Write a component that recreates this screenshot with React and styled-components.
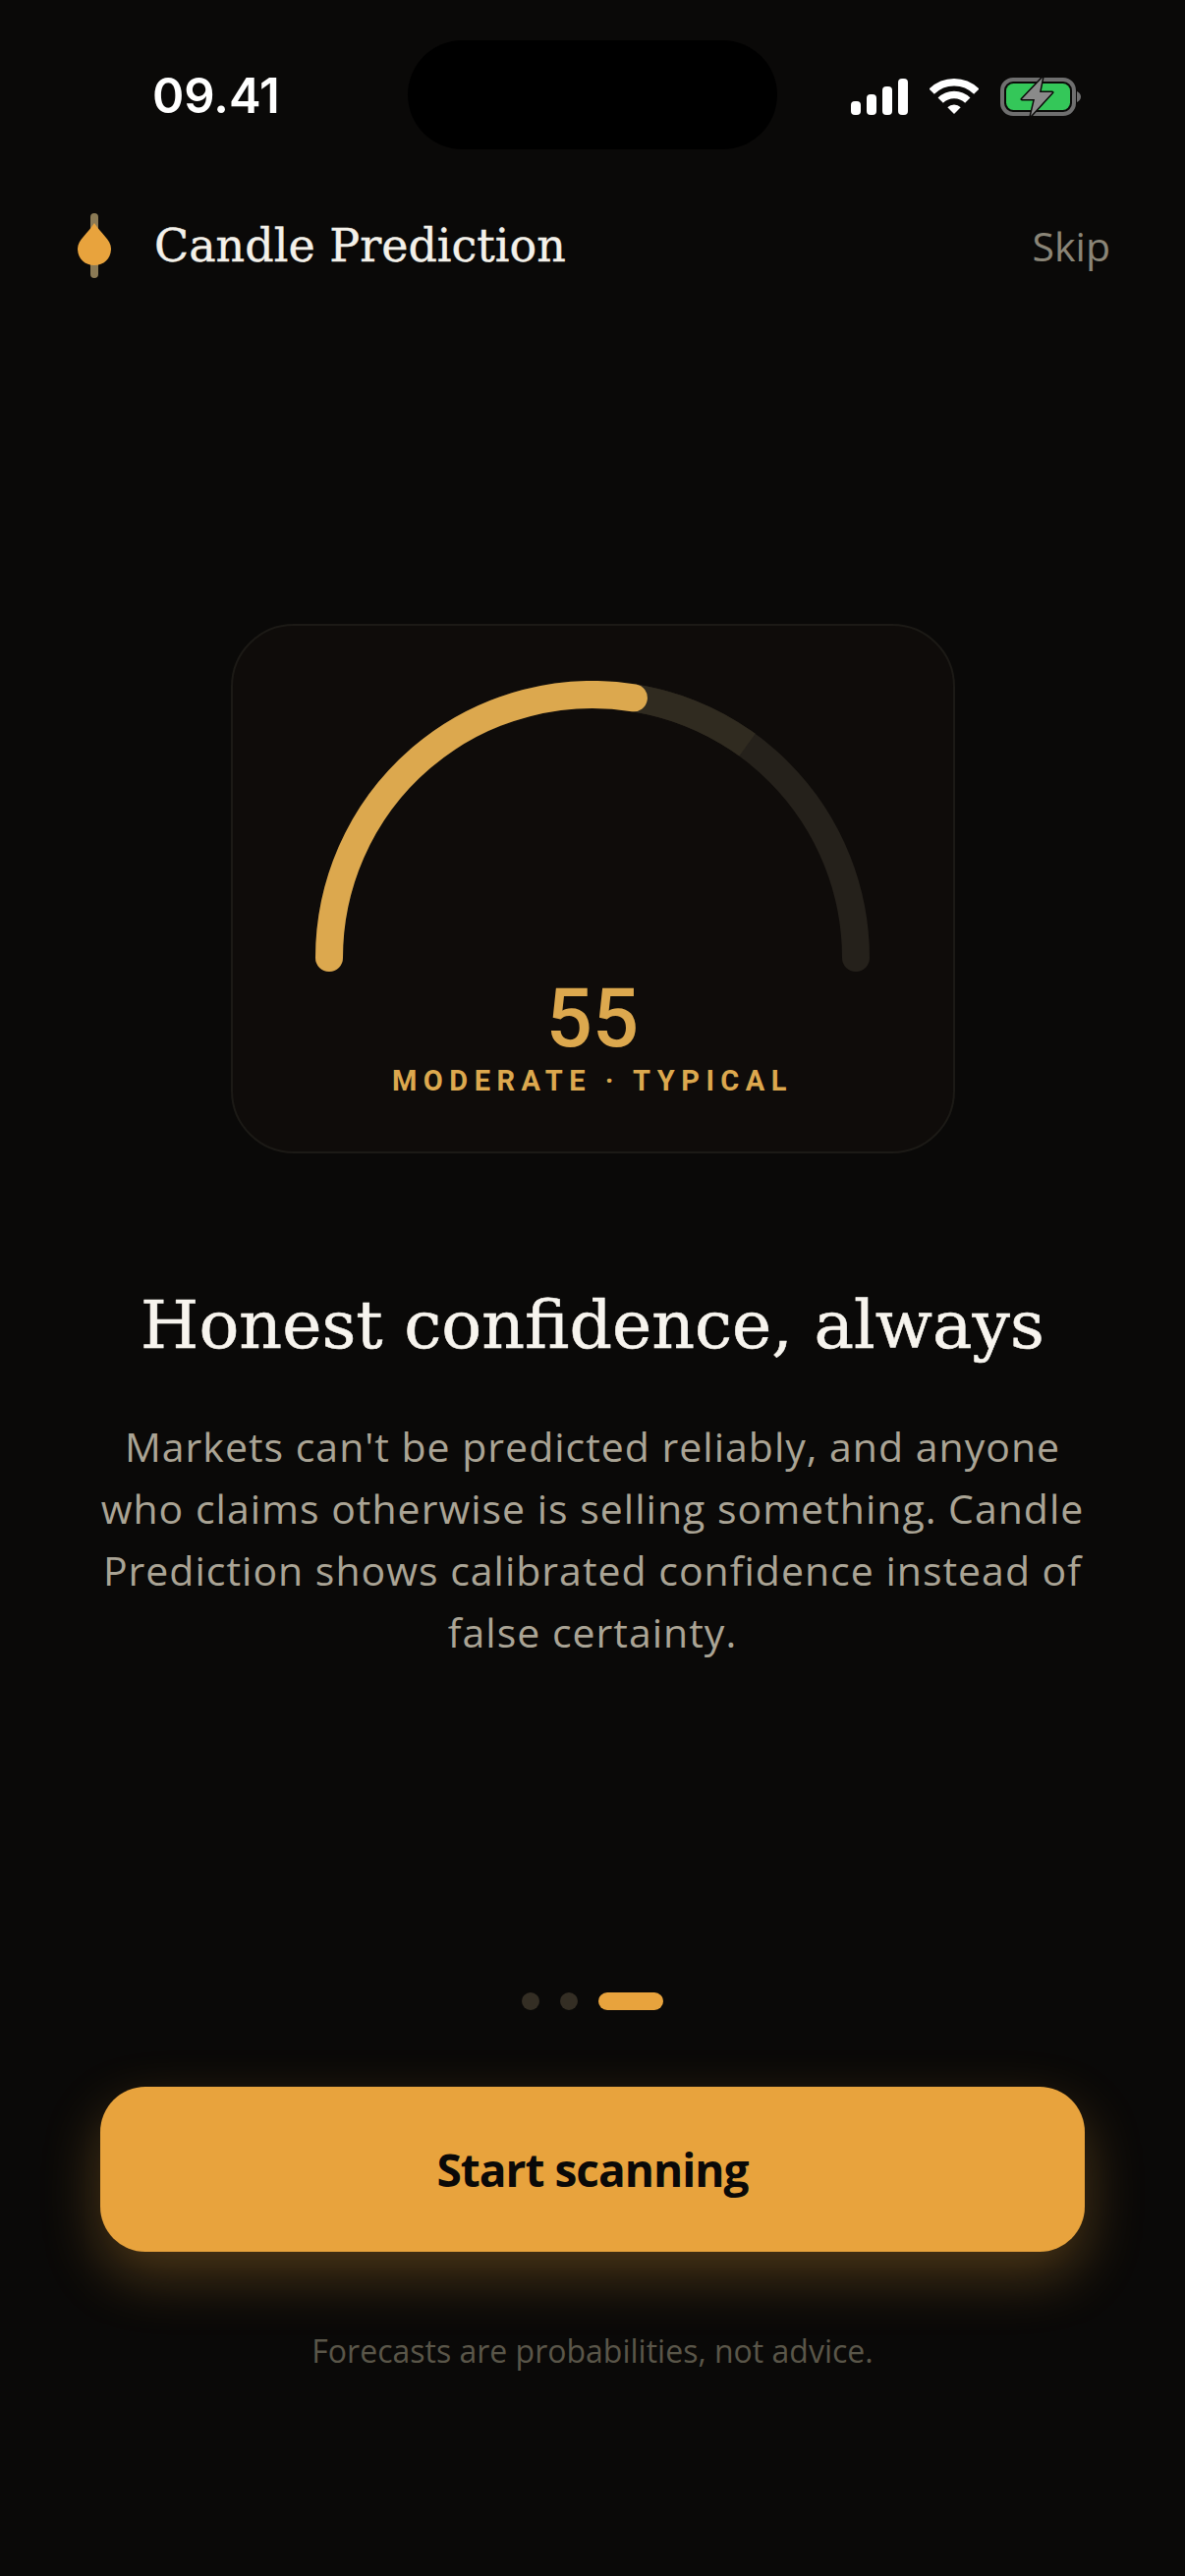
import React from "react";
import styled, { createGlobalStyle } from "styled-components";

const AMBER = "#e8a33d";
const GOLD = "#dca84e";
const SANS = `"Open Sans", "Noto Sans", sans-serif`;
const SLAB = `"DejaVu Serif", serif`;
const UI = `Inter, "Liberation Sans", sans-serif`;
const DIGITS = `Roboto, "Liberation Sans", sans-serif`;

const GlobalStyle = createGlobalStyle`
  html, body {
    margin: 0;
    padding: 0;
    background: #0a0908;
  }
`;

const Screen = styled.div`
  width: 1206px;
  height: 2622px;
  padding-top: 41px;
  box-sizing: border-box;
  background: #0a0908;
  display: flex;
  flex-direction: column;
  align-items: center;
  overflow: hidden;
`;

const StatusBar = styled.div`
  width: 100%;
  box-sizing: border-box;
  padding: 0 106px;
  display: grid;
  grid-template-columns: 1fr 376px 1fr;
  align-items: center;
`;

const Time = styled.div`
  padding-left: 49px;
  padding-top: 2px;
  font-family: ${UI};
  font-size: 49px;
  font-weight: 600;
  color: #fff;
`;

const Island = styled.div`
  height: 111px;
  border-radius: 56px;
  background: #000;
`;

const StatusIcons = styled.div`
  display: flex;
  justify-content: flex-end;
  align-items: center;
  gap: 22px;
  padding-top: 3px;
`;

const Header = styled.header`
  width: 100%;
  height: 66px;
  margin-top: 65px;
  padding: 0 76px 0 79px;
  box-sizing: border-box;
  display: flex;
  align-items: center;
`;

const Brand = styled.div`
  flex: 1;
  display: flex;
  align-items: center;
  gap: 44px;
`;

const BrandName = styled.span`
  font-family: ${SLAB};
  font-size: 46px;
  font-weight: 400;
  color: #f4f1ea;
  -webkit-text-stroke: 0.4px #f4f1ea;
`;

const Skip = styled.span`
  font-family: ${SANS};
  font-size: 41px;
  color: #8a8577;
`;

const GaugeCard = styled.section`
  width: 737px;
  height: 539px;
  margin-top: 352px;
  box-sizing: border-box;
  border: 2px solid #1c1a16;
  border-radius: 64px;
  background: #0f0c0a;
  display: flex;
  flex-direction: column;
  align-items: center;
  padding-top: 56px;
`;

const Score = styled.div`
  margin-top: -6px;
  font-family: ${DIGITS};
  font-size: 83px;
  line-height: 92px;
  font-weight: 500;
  color: ${GOLD};
`;

const ScoreLabel = styled.div`
  margin-top: -1px;
  font-family: ${DIGITS};
  font-size: 29px;
  line-height: 36px;
  font-weight: 700;
  letter-spacing: 6.5px;
  color: ${GOLD};
`;

const Title = styled.h1`
  margin: 129px 0 0;
  font-family: ${SLAB};
  font-size: 68px;
  line-height: 92px;
  font-weight: 400;
  color: #f7f4ee;
  -webkit-text-stroke: 0.6px #f7f4ee;
  white-space: nowrap;
`;

const Body = styled.p`
  margin: 46px 0 0;
  font-family: ${SANS};
  font-size: 41px;
  line-height: 63px;
  letter-spacing: 1px;
  color: #aaa495;
  text-align: center;
  white-space: nowrap;
`;

const Dots = styled.div`
  margin-top: 335px;
  display: flex;
  gap: 21px;
`;

const Dot = styled.span`
  width: ${({ $active }) => ($active ? "66px" : "18px")};
  height: 18px;
  border-radius: 9px;
  background: ${({ $active }) => ($active ? AMBER : "#342e24")};
`;

const StartButton = styled.button`
  width: 1002px;
  height: 168px;
  margin-top: 78px;
  border: 0;
  border-radius: 46px;
  background: ${AMBER};
  box-shadow: 0 24px 58px rgba(232, 163, 61, 0.3);
  font-family: ${SANS};
  font-size: 46px;
  font-weight: 700;
  letter-spacing: -1px;
  color: #0a0908;
`;

const Footnote = styled.p`
  margin: 79px 0 0;
  font-family: ${SANS};
  font-size: 32px;
  line-height: 44px;
  color: #5a5649;
`;

const SignalIcon = () => (
  <svg width="58" height="37" viewBox="0 0 58 37">
    <rect x="0" y="23" width="10" height="14" rx="4" fill="#fff" />
    <rect x="16" y="16" width="10" height="21" rx="4" fill="#fff" />
    <rect x="32" y="8" width="10" height="29" rx="4" fill="#fff" />
    <rect x="48" y="0" width="10" height="37" rx="4" fill="#fff" />
  </svg>
);

const WifiIcon = () => (
  <svg width="50" height="37" viewBox="0 0 50 37" fill="none">
    <path d="M2.2 13.2 A32.25 32.25 0 0 1 47.8 13.2" stroke="#fff" strokeWidth="7.5" />
    <path d="M11.2 22.2 A19.5 19.5 0 0 1 38.8 22.2" stroke="#fff" strokeWidth="7.5" />
    <path d="M25 36 L18.3 29.3 A9.5 9.5 0 0 1 31.7 29.3 Z" fill="#fff" />
  </svg>
);

const BatteryIcon = () => (
  <svg width="82" height="39" viewBox="0 0 82 39" fill="none">
    <rect x="2" y="2" width="73" height="35" rx="11" stroke="#6f6f6f" strokeWidth="4" />
    <rect x="6" y="6" width="65" height="27" rx="7.5" fill="#34c759" />
    <path d="M78 14 C80.5 15 82 17 82 19.5 C82 22 80.5 24 78 25 Z" fill="#6f6f6f" />
    <path
      d="M43 0 L22 22 L35 22 L31 39 L53 15 L40 15 Z"
      fill="#8a8a8a"
      stroke="#0a0908"
      strokeWidth="3"
      paintOrder="stroke"
      strokeLinejoin="round"
    />
  </svg>
);

const CandleLogo = () => (
  <svg width="34" height="66" viewBox="0 0 34 66">
    <rect x="13" y="0" width="8" height="66" rx="4" fill="#8b7a55" />
    <path
      d="M17 10 C23 20 34 27 34 36 C34 46 27 53 17 53 C7 53 0 46 0 36 C0 27 11 20 17 10 Z"
      fill={AMBER}
    />
  </svg>
);

// point on the half circle for a 0..1 value
const arcPoint = (t) => {
  const a = Math.PI * t;
  return `${300 - 268 * Math.cos(a)} ${282 - 268 * Math.sin(a)}`;
};
const arc = (from, to) => `M${arcPoint(from)} A268 268 0 0 1 ${arcPoint(to)}`;

const Gauge = ({ value }) => (
  <svg width="600" height="304" viewBox="0 0 600 304" fill="none">
    <path d={arc(0, 1)} stroke="#25211b" strokeWidth="28" strokeLinecap="round" />
    <path d={arc(value, 0.7)} stroke="#302b20" strokeWidth="28" />
    <path d={arc(0, value)} stroke={GOLD} strokeWidth="28" strokeLinecap="round" />
  </svg>
);

export default function App() {
  return (
    <Screen>
      <GlobalStyle />
      <StatusBar>
        <Time>09.41</Time>
        <Island />
        <StatusIcons>
          <SignalIcon />
          <WifiIcon />
          <BatteryIcon />
        </StatusIcons>
      </StatusBar>
      <Header>
        <Brand>
          <CandleLogo />
          <BrandName>Candle Prediction</BrandName>
        </Brand>
        <Skip>Skip</Skip>
      </Header>
      <GaugeCard>
        <Gauge value={0.55} />
        <Score>55</Score>
        <ScoreLabel>MODERATE · TYPICAL</ScoreLabel>
      </GaugeCard>
      <Title>Honest confidence, always</Title>
      <Body>
        Markets can't be predicted reliably, and anyone
        <br />
        who claims otherwise is selling something. Candle
        <br />
        Prediction shows calibrated confidence instead of
        <br />
        false certainty.
      </Body>
      <Dots>
        <Dot />
        <Dot />
        <Dot $active />
      </Dots>
      <StartButton>Start scanning</StartButton>
      <Footnote>Forecasts are probabilities, not advice.</Footnote>
    </Screen>
  );
}
